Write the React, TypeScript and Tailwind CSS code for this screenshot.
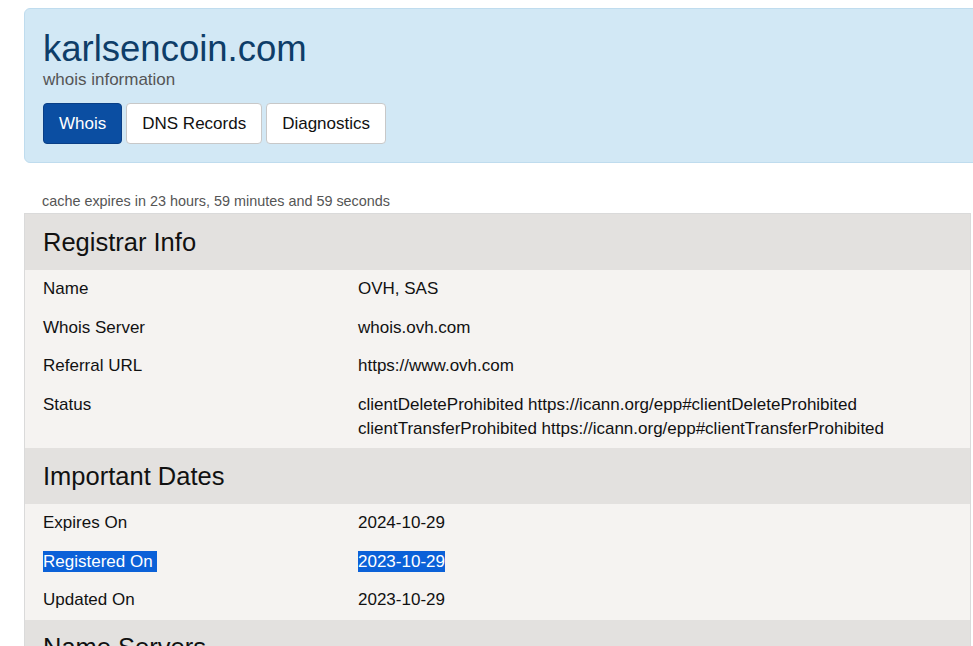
import type { ReactNode } from "react";

type Row = { label: string; value: ReactNode; selected?: boolean };

type Section = { title: string; rows: Row[] };

const sections: Section[] = [
  {
    title: "Registrar Info",
    rows: [
      { label: "Name", value: "OVH, SAS" },
      { label: "Whois Server", value: "whois.ovh.com" },
      { label: "Referral URL", value: "https://www.ovh.com" },
      {
        label: "Status",
        value: (
          <>
            clientDeleteProhibited https://icann.org/epp#clientDeleteProhibited
            <br />
            clientTransferProhibited https://icann.org/epp#clientTransferProhibited
          </>
        ),
      },
    ],
  },
  {
    title: "Important Dates",
    rows: [
      { label: "Expires On", value: "2024-10-29" },
      { label: "Registered On", value: "2023-10-29", selected: true },
      { label: "Updated On", value: "2023-10-29" },
    ],
  },
  {
    title: "Name Servers",
    rows: [
      { label: "ns1", value: "dns200.anycast.me" },
      { label: "ns2", value: "ns200.anycast.me" },
    ],
  },
];

const tabs = ["Whois", "DNS Records", "Diagnostics"];

function Selected({ children }: { children: ReactNode }) {
  return <span className="bg-[#0b61d8] py-[1px] text-white">{children}</span>;
}

export default function App() {
  return (
    <div className="h-[646px] w-[973px] overflow-hidden bg-white font-['Liberation_Sans',Arial,sans-serif] text-[#111]">
      <div className="ml-6 mt-2 w-[980px] rounded-l-[6px] border border-[#bfdcee] bg-[#d2e8f5] px-[18px] pb-[18px] pt-[19px]">
        <h1 className="text-[36.5px] leading-[42px] text-[#0e3d68]">karlsencoin.com</h1>
        <p className="text-[17px] leading-[20px] text-[#555]">whois information</p>
        <div className="mt-[13px] flex gap-[4px]">
          {tabs.map((tab, i) => (
            <button
              key={tab}
              type="button"
              className={`h-[41px] rounded-[4px] border px-[15px] text-[17px] ${
                i === 0
                  ? "border-[#0a3f86] bg-[#0b4ea2] text-white"
                  : "border-[#c8c8c8] bg-white text-[#111]"
              }`}
            >
              {tab}
            </button>
          ))}
        </div>
      </div>

      <p className="ml-[42px] mt-[30px] text-[14.4px] leading-[17px] text-[#555]">
        cache expires in 23 hours, 59 minutes and 59 seconds
      </p>

      <div className="ml-6 mt-[3px] w-[947px] border border-[#dadada]">
        {sections.map((section) => (
          <div key={section.title}>
            <div className="flex h-[56px] items-center bg-[#e3e1df] px-[18px] text-[25.5px]">
              {section.title}
            </div>
            <div className="bg-[#f5f3f1]">
              {section.rows.map((row) => (
                <div key={row.label} className="grid grid-cols-[315px_1fr] py-[7.25px] text-[17px] leading-[24px]">
                  <div className="pl-[18px]">
                    {row.selected ? <Selected>{row.label}&nbsp;</Selected> : row.label}
                  </div>
                  <div className="pl-[18px]">
                    {row.selected ? <Selected>{row.value}</Selected> : row.value}
                  </div>
                </div>
              ))}
            </div>
          </div>
        ))}
      </div>
    </div>
  );
}
